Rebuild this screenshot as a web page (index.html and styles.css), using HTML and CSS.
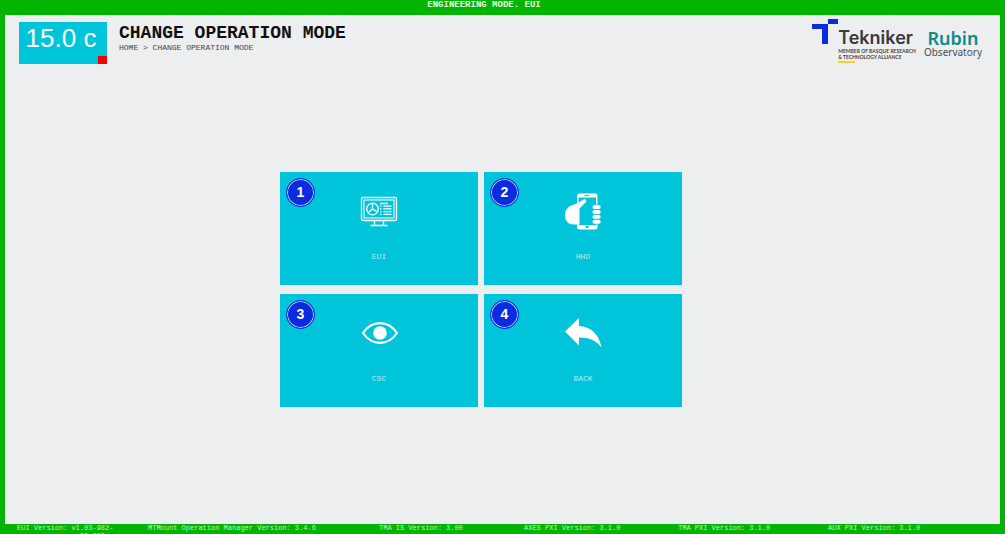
FILE: index.html
```html
<!DOCTYPE html>
<html lang="en">
<head>
<meta charset="utf-8">
<title>Change Operation Mode</title>
<meta name="viewport" content="width=device-width, initial-scale=1">
<link rel="stylesheet" href="styles.css">
</head>
<body class="app">
  <div class="mode-bar">ENGINEERING MODE. EUI</div>
  <div class="panel">
    <header class="header">
      <div class="temperature">15.0 c<span class="alarm"></span></div>
      <div class="heading">
        <h1 class="title">CHANGE OPERATION MODE</h1>
        <nav class="breadcrumb" aria-label="Breadcrumb">HOME &gt; CHANGE OPERATION MODE</nav>
      </div>
      <div class="brands">
        <div class="tekniker">
          <svg class="tekniker-mark" viewBox="0 0 26 25" aria-hidden="true"><path fill="#0a2be0" d="M16 0h10v5H16v20h-6V10H0V5h16z"/></svg>
          <div class="tekniker-text">
            <div class="tekniker-name">Tekniker</div>
            <div class="tekniker-sub">MEMBER OF BASQUE RESEARCH<br>&amp; TECHNOLOGY ALLIANCE</div>
            <div class="tekniker-line"></div>
          </div>
        </div>
        <div class="rubin">
          <div class="rubin-name">Rubin</div>
          <div class="rubin-sub">Observatory</div>
        </div>
      </div>
    </header>
    <main class="modes">
      <button class="tile" type="button">
        <span class="badge">1</span>
        <svg class="icon" viewBox="0 0 38 38" fill="none" stroke="#fff" aria-hidden="true">
          <rect x="1.5" y="5.5" width="35" height="23" rx="1.5" stroke-width="1.3"/>
          <rect x="4" y="8" width="30" height="18" stroke-width="1"/>
          <circle cx="12.5" cy="17" r="5.8" stroke-width="1.3"/>
          <path stroke-width="1.3" d="M12.5 11v6l5 3M12.5 17l-4.5 4"/>
          <path stroke-width="1.3" d="M20 11.5h8M23.5 14.2h8M23.5 16.9h8M23.5 19.6h8M23.5 22.3h8M20 14.2h1.5M20 16.9h1.5M20 19.6h1.5M20 22.3h1.5"/>
          <path stroke-width="1.3" d="M14.5 28.5v4.500M23.5 28.5v4.500M10.5 33.5h17"/>
        </svg>
        <span class="label">EUI</span>
      </button>
      <button class="tile" type="button">
        <span class="badge">2</span>
        <svg class="icon" viewBox="0 0 38 38" aria-hidden="true">
          <path fill="#fff" fill-rule="evenodd" d="M15.500 1.500h15.500a2.500 2.500 0 0 1 2.500 2.500v31a2.500 2.500 0 0 1-2.500 2.500H15.500a2.500 2.500 0 0 1-2.500-2.500V4a2.500 2.500 0 0 1 2.500-2.500zM14.500 5.500v27.500h17.500V5.500z"/>
          <path fill="#fff" d="M19.500 7.500c2-1.200 3.700 1 2.400 2.600L15.500 16.500V32.500H9.500c-5.500 0-8.500-4-8.500-9.500 0-6 4-9.500 9-10.500 4-1 6-3 9.500-5z"/>
          <path stroke="#00c5da" stroke-width="1" d="M20.500 3.500h5"/>
          <rect x="22" y="34" width="2.500" height="2" fill="#00c5da"/>
          <path stroke="#00c5da" stroke-width="4" d="M32.500 12.500v20"/>
          <path stroke="#fff" stroke-width="4" stroke-linecap="round" d="M30.500 15h4.200M30.500 19.900h4.200M30.500 24.800h4.200M30.500 29.700h4.200"/>
        </svg>
        <span class="label">HHD</span>
      </button>
      <button class="tile" type="button">
        <span class="badge">3</span>
        <svg class="icon" viewBox="0 0 38 38" aria-hidden="true">
          <path fill="none" stroke="#fff" stroke-width="2.200" stroke-linejoin="round" d="M3 19C12 5.800 28 5.800 37 19C28 32.200 12 32.200 3 19z"/>
          <circle cx="20" cy="19" r="6.800" fill="#fff"/>
        </svg>
        <span class="label">CSC</span>
      </button>
      <button class="tile" type="button">
        <span class="badge">4</span>
        <svg class="icon" viewBox="0 0 38 38" aria-hidden="true">
          <path fill="#fff" d="M1 17.500L15 4v8C27 12.500 35 20 37.500 33.500C32 26.500 26 23.500 15 23.500v8z"/>
        </svg>
        <span class="label">BACK</span>
      </button>
    </main>
  </div>
  <footer class="versions">
    <div class="version"><span>EUI Version:</span><span class="value">v1.03-982-<br>03-200</span></div>
    <div class="version"><span>MTMount Operation Manager Version:</span><span class="value">3.4.6</span></div>
    <div class="version"><span>TMA IS Version:</span><span class="value">3.00</span></div>
    <div class="version"><span>AXES PXI Version:</span><span class="value">3.1.0</span></div>
    <div class="version"><span>TMA PXI Version:</span><span class="value">3.1.0</span></div>
    <div class="version"><span>AUX PXI Version:</span><span class="value">3.1.0</span></div>
  </footer>
</body>
</html>
```

FILE: styles.css
```css
* {
  box-sizing: border-box;
}

.app {
  margin: 0;
  height: 100vh;
  display: flex;
  flex-direction: column;
  background: #03b403;
  font-family: "Liberation Mono", "Courier New", monospace;
}

.mode-bar {
  height: 15px;
  padding-right: 37px;
  text-align: center;
  font-size: 9px;
  font-weight: bold;
  line-height: 10px;
  color: #e4fbe4;
}

.panel {
  flex: 1;
  min-height: 0;
  margin: 0 5px;
  display: flex;
  flex-direction: column;
  background: #edeef0;
}

.header {
  display: flex;
  align-items: flex-start;
  padding: 4px 18px 0 14px;
}

.temperature {
  position: relative;
  width: 88px;
  height: 42px;
  margin-top: 3px;
  padding-right: 4px;
  background: #00c5da;
  color: #fff;
  font-family: "Liberation Sans", Arial, sans-serif;
  font-size: 26px;
  line-height: 32px;
  text-align: center;
}

.alarm {
  position: absolute;
  right: 0;
  bottom: 0;
  width: 9px;
  height: 8px;
  background: #f80000;
}

.heading {
  flex: 1;
  padding: 4px 0 0 12px;
}

.title {
  margin: 0;
  font-size: 18px;
  line-height: 20px;
  color: #111;
}

.breadcrumb {
  font-size: 8px;
  line-height: 10px;
  color: #444;
}

.brands {
  display: flex;
  gap: 8px;
}

.tekniker {
  display: flex;
}

.tekniker-mark {
  width: 26px;
  height: 25px;
}

.tekniker-text {
  padding-top: 9px;
}

.tekniker-name {
  font-family: Inter, sans-serif;
  font-size: 18px;
  font-weight: 600;
  line-height: 20px;
  color: #3a3a3c;
}

.tekniker-sub {
  font-family: Lato, sans-serif;
  font-size: 5px;
  font-weight: bold;
  line-height: 6px;
  color: #444;
}

.tekniker-line {
  width: 17px;
  height: 2px;
  margin-top: 1px;
  background: #f7d51d;
}

.rubin {
  padding-top: 9px;
  text-align: center;
  font-family: "Noto Sans", sans-serif;
}

.rubin-name {
  font-size: 18px;
  font-weight: 600;
  line-height: 20px;
  color: #0c8a8a;
}

.rubin-sub {
  font-size: 10px;
  font-weight: 400;
  line-height: 8px;
  color: #4a4d50;
}

.modes {
  flex: 1;
  display: grid;
  grid-template-columns: repeat(2, minmax(0, 198px));
  grid-auto-rows: 113px;
  gap: 9px 6px;
  place-content: center;
  padding: 0 43px 10px 0;
}

.tile {
  position: relative;
  display: flex;
  flex-direction: column;
  align-items: center;
  gap: 22px;
  padding: 20px 0 0;
  border: 0;
  background: #00c5da;
  color: #b5eef4;
  font-family: inherit;
  font-size: 8px;
  line-height: 10px;
  cursor: pointer;
}

.icon {
  width: 38px;
  height: 38px;
}

.badge {
  position: absolute;
  top: 6px;
  left: 6px;
  width: 29px;
  height: 29px;
  border: 1px solid #0a2be0;
  border-radius: 50%;
  background: #0a2be0;
  box-shadow: inset 0 0 0 1px #c5d0ff;
  color: #fff;
  font-family: "Liberation Sans", Arial, sans-serif;
  font-size: 14px;
  font-weight: bold;
  line-height: 27px;
  text-align: center;
}

.versions {
  display: grid;
  grid-template-columns: 131fr 231fr 145fr 154fr 150fr 177fr;
  height: 10px;
  padding-left: 17px;
  overflow: hidden;
  font-size: 7px;
  line-height: 8px;
  color: #c0f2c0;
}

.version {
  display: flex;
  gap: 4px;
  white-space: nowrap;
}

.value {
  text-align: center;
}
```
